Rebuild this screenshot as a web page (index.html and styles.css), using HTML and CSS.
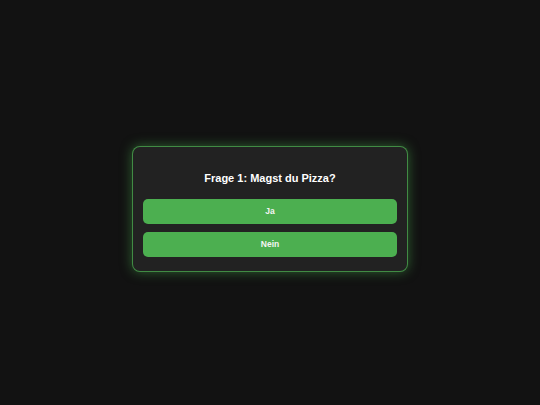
FILE: index.html
```html
<!DOCTYPE html>
<html>
<head>
<meta charset="utf-8">
<link rel="stylesheet" href="styles.css">
</head>
<body>
<div class="page">
  <div class="card">
    <h2 class="question">Frage 1: Magst du Pizza?</h2>
    <div class="answers">
      <button class="answer">Ja</button>
      <button class="answer">Nein</button>
    </div>
  </div>
</div>
</body>
</html>
```
FILE: styles.css
```css
html, body {
  margin: 0;
  padding: 0;
  background: #121212;
  font-family: "Liberation Sans", Arial, sans-serif;
}
.page {
  height: 405px;
  display: flex;
  align-items: center;
  justify-content: center;
  padding-top: 12px;
  box-sizing: border-box;
}
.card {
  width: 276px;
  box-sizing: border-box;
  background: #222222;
  border: 1px solid rgba(76, 175, 80, 0.75);
  border-radius: 8px;
  box-shadow: 0 0 12px rgba(76, 175, 80, 0.5);
  padding: 25px 10px 14px;
}
.question {
  margin: 0 0 15px;
  color: #ffffff;
  font-size: 11px;
  font-weight: bold;
  text-align: center;
}
.answers {
  display: flex;
  flex-direction: column;
  gap: 8px;
}
.answer {
  height: 25px;
  border: none;
  border-radius: 5px;
  background: #4caf50;
  color: #f4f4f4;
  font-family: "Liberation Sans", Arial, sans-serif;
  font-size: 8.5px;
  font-weight: bold;
  padding: 0;
}
```
